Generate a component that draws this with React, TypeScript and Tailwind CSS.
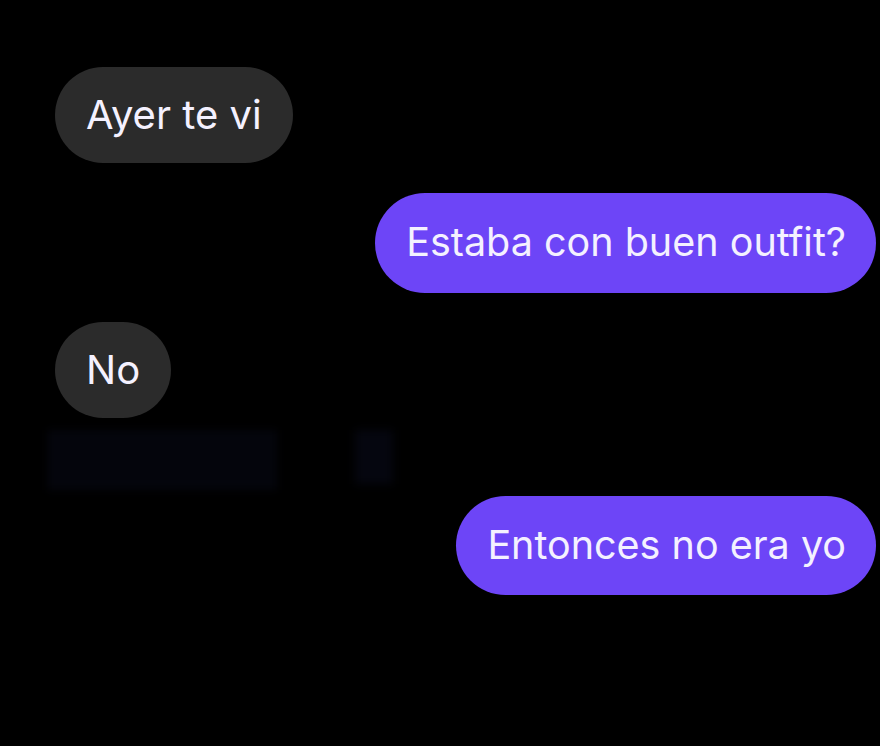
const Bubble = ({ text, mine }: { text: string; mine?: boolean }) => (
  <div
    className={`rounded-full text-[#f4f1ff] leading-none ${
      mine
        ? 'self-end bg-[#6d45f7] text-[39.5px] pl-[31px] pr-[30px] py-[30px]'
        : 'self-start bg-[#2b2b2b] text-[40px] px-[31px] py-[28px]'
    }`}
  >
    {text}
  </div>
);

export default function App() {
  return (
    <div
      className="w-[880px] h-[746px] bg-black overflow-hidden flex flex-col pt-[67px] pl-[55px] pr-[4px]"
      style={{ fontFamily: 'Inter, "Noto Sans", sans-serif' }}
    >
      <Bubble text="Ayer te vi" />
      <div className="h-[30px]" />
      <Bubble text="Estaba con buen outfit?" mine />
      <div className="h-[29px]" />
      <Bubble text="No" />
      <div className="h-[78px] relative">
        <div className="absolute left-[-8px] top-[12px] w-[230px] h-[60px] bg-[#04050c] blur-[4px]" />
        <div className="absolute left-[300px] top-[12px] w-[38px] h-[54px] bg-[#05060f] blur-[5px]" />
      </div>
      <Bubble text="Entonces no era yo" mine />
    </div>
  );
}
